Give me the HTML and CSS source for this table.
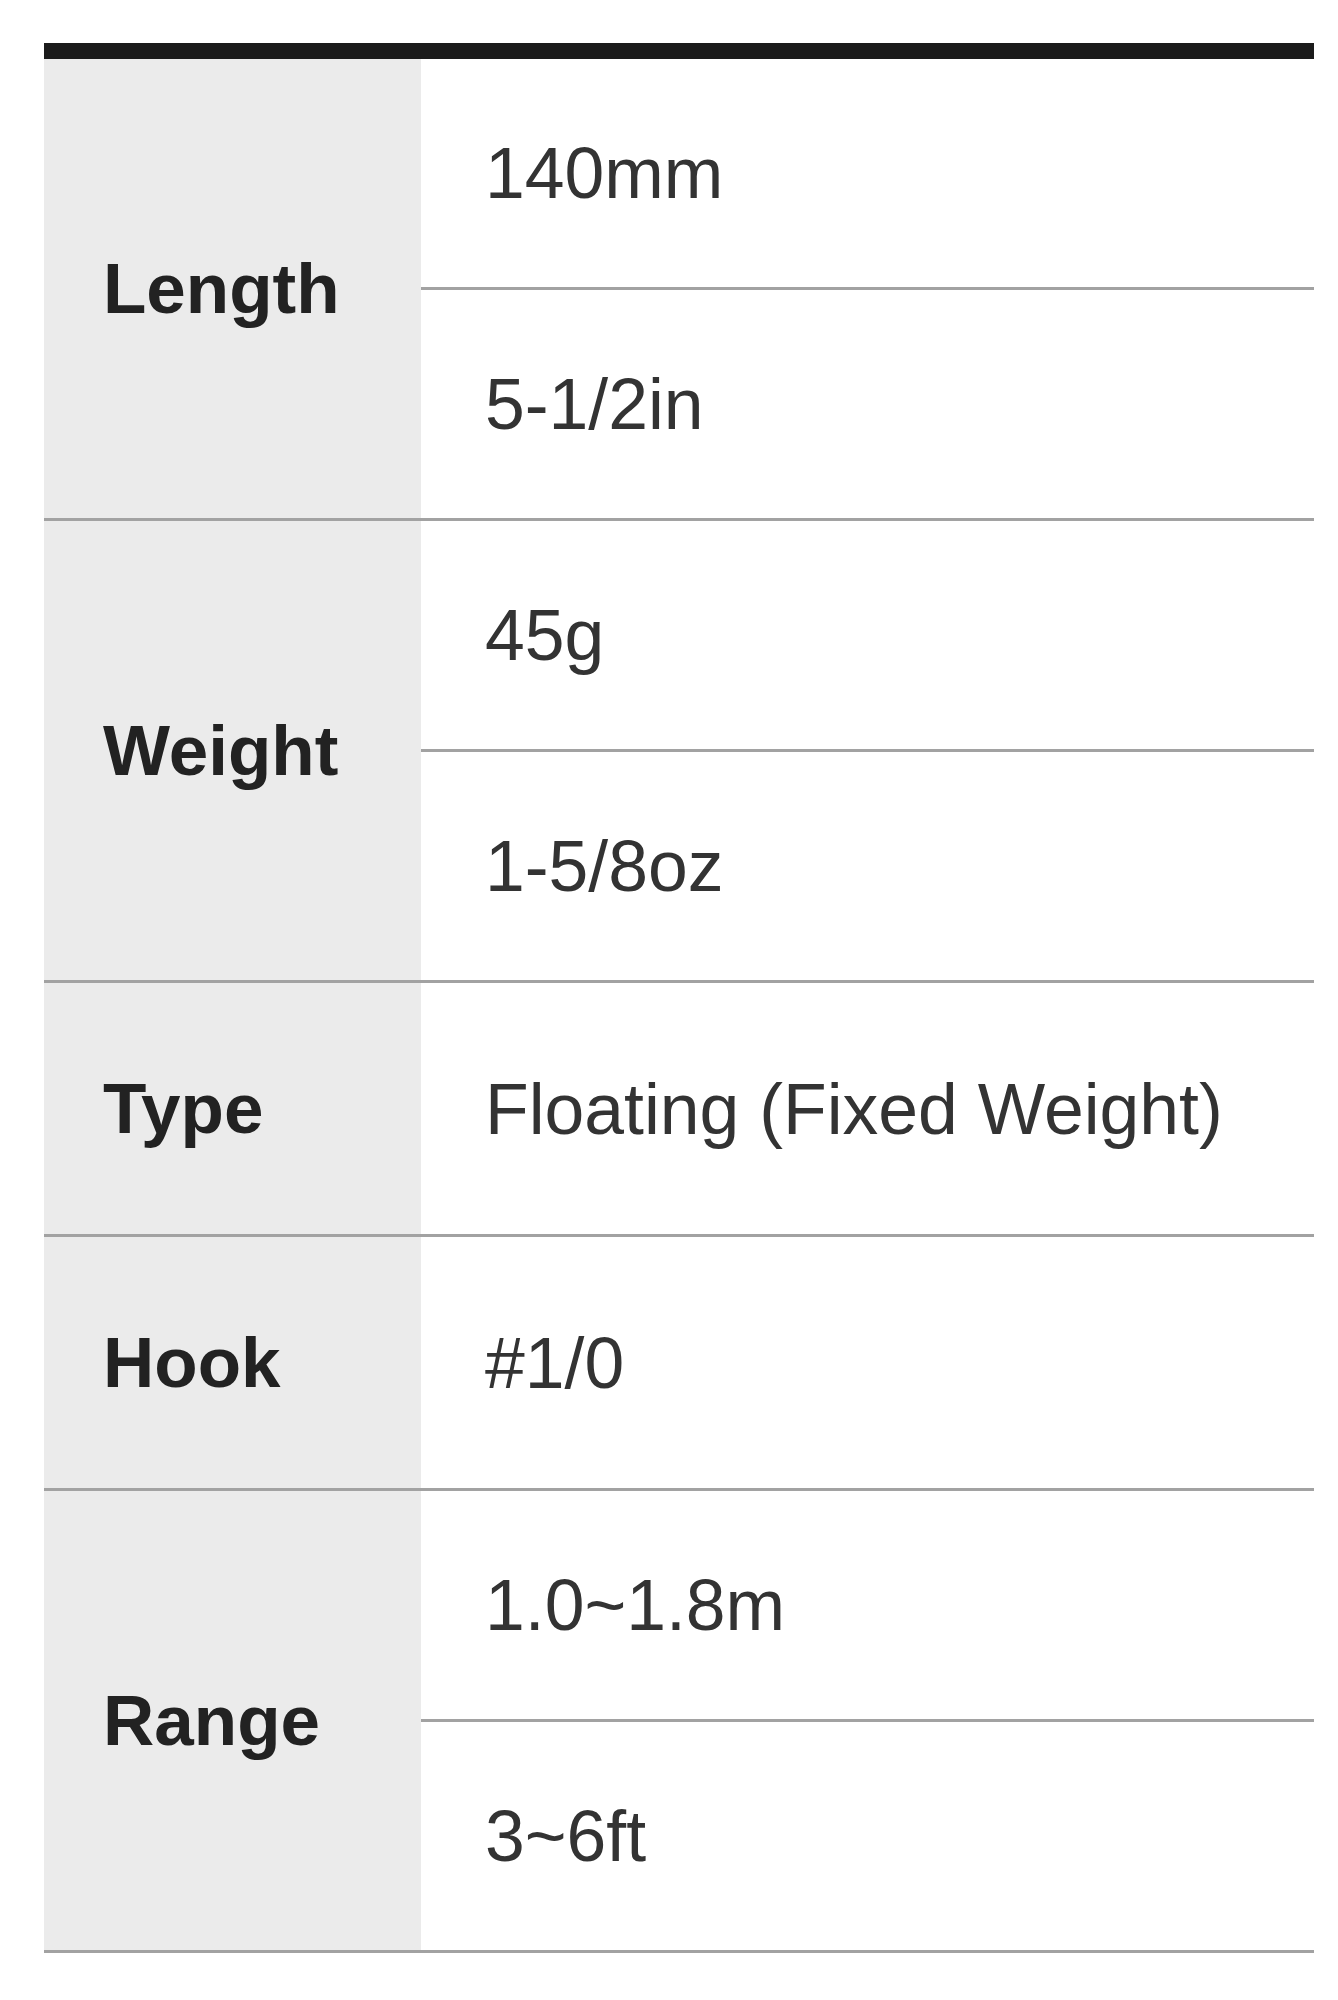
FILE: index.html
```html
<!DOCTYPE html>
<html lang="en">
<head>
<meta charset="utf-8">
<title>Spec</title>
<link rel="stylesheet" href="styles.css">
</head>
<body>
<div class="spec">
  <div class="group">
    <div class="label">Length</div>
    <div class="values">
      <div class="value">140mm</div>
      <div class="value">5-1/2in</div>
    </div>
  </div>
  <div class="group">
    <div class="label">Weight</div>
    <div class="values">
      <div class="value">45g</div>
      <div class="value">1-5/8oz</div>
    </div>
  </div>
  <div class="group single">
    <div class="label">Type</div>
    <div class="values">
      <div class="value">Floating (Fixed Weight)</div>
    </div>
  </div>
  <div class="group single">
    <div class="label">Hook</div>
    <div class="values">
      <div class="value">#1/0</div>
    </div>
  </div>
  <div class="group">
    <div class="label">Range</div>
    <div class="values">
      <div class="value">1.0~1.8m</div>
      <div class="value">3~6ft</div>
    </div>
  </div>
</div>
</body>
</html>
```

FILE: styles.css
```css
html, body {
  margin: 0;
  padding: 0;
  background: #ffffff;
}

body {
  font-family: "Liberation Sans", Arial, sans-serif;
}

.spec {
  margin: 43px 0 0 44px;
  width: 1270px;
  border-top: 16px solid #1b1b1b;
}

.group {
  display: grid;
  grid-template-columns: 377px 1fr;
  border-bottom: 3px solid #a2a2a2;
}

.label {
  background: #ebebeb;
  display: flex;
  align-items: center;
  padding-left: 59px;
  font-weight: bold;
  font-size: 71px;
  color: #222222;
}

.values {
  display: flex;
  flex-direction: column;
}

.value {
  height: 228px;
  display: flex;
  align-items: center;
  padding-left: 64px;
  font-size: 71.5px;
  color: #333333;
}

.value + .value {
  border-top: 3px solid #a2a2a2;
}

.single .value {
  height: 251px;
}
```
